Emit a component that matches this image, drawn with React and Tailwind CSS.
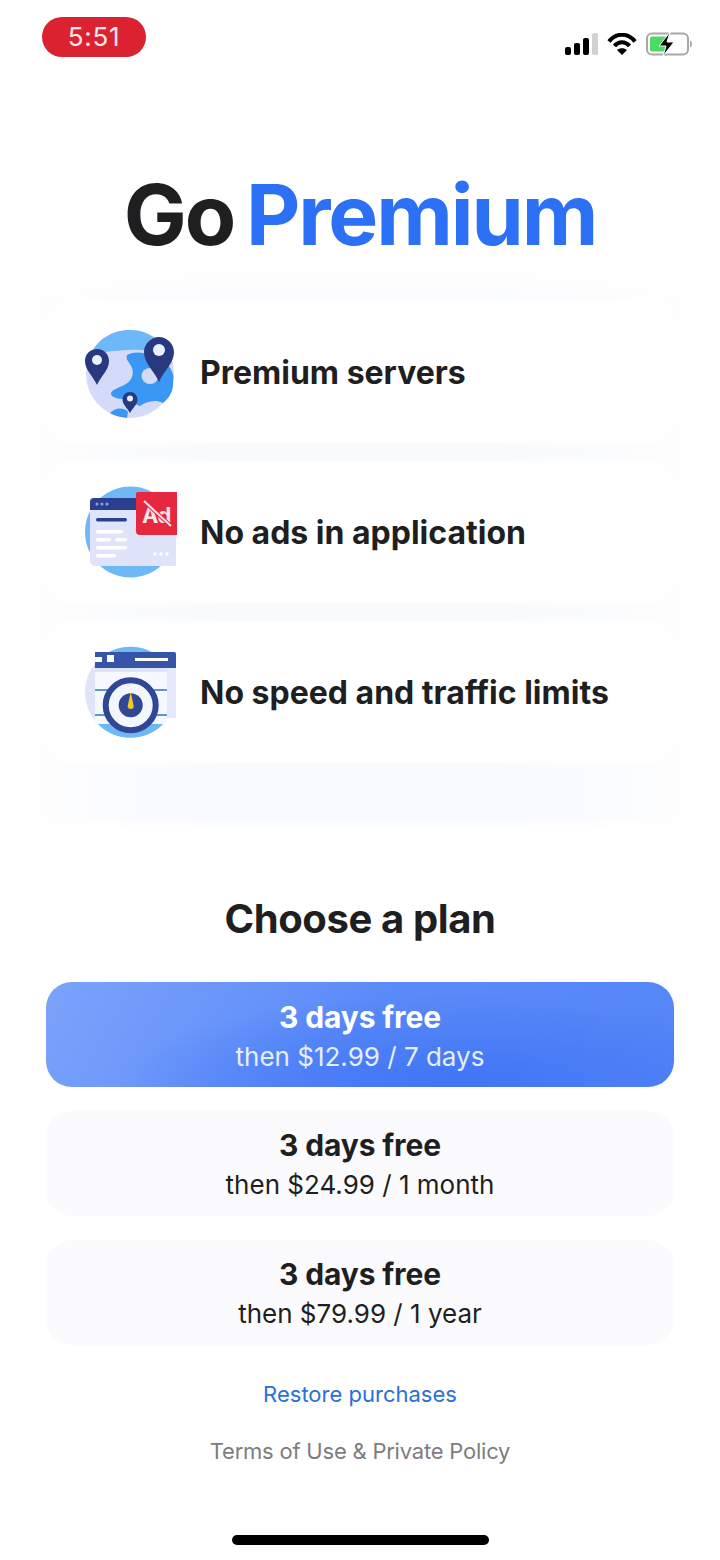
const features = [
  { id: "servers", label: "Premium servers", icon: <GlobeIcon /> },
  { id: "ads", label: "No ads in application", icon: <AdsIcon /> },
  { id: "speed", label: "No speed and traffic limits", icon: <SpeedIcon /> },
];

const plans = [
  { id: "week", price: "then $12.99 / 7 days", active: true },
  { id: "month", price: "then $24.99 / 1 month" },
  { id: "year", price: "then $79.99 / 1 year" },
];

function GlobeIcon() {
  return (
    <svg width="96" height="92" viewBox="0 0 96 92" fill="none">
      <circle cx="46" cy="48" r="44" fill="#d3dbf8" />
      <path d="M6 30C12 14 28 4 46 4c20 0 36 13 43 34-4-4-9-9-14-11-9-3-20-4-31-3-13 1-26 1-38 6Z" fill="#6db8f8" />
      <path d="M43 29C50 25 60 26 70 30c10 3 17 10 19.500 20L89 60c-1 8-5 13-10 17-9-4-17-1-23 3-6-2-10-7-16-7-5 0-12-1-13-5 0-5 9-6 15-10 6-4 8-10 6-16-2-6-7-8-5-13Z" fill="#3a97f4" />
      <ellipse cx="66" cy="50" rx="8.500" ry="8" fill="#d3dbf8" />
      <path d="M26 87c4-4 12-7 18-1l-1 6c-7-1-12-2-17-5Z" fill="#3a97f4" />
      <path d="M13 23c7 0 12 5 12 12 0 9-8 15-12 24C9 50 1 44 1 35c0-7 5-12 12-12Z" fill="#28397f" />
      <circle cx="13" cy="34" r="5" fill="#e7f0fc" />
      <path d="M75 11c8 0 15 7 15 15 0 12-10 18-15 30-5-12-15-18-15-30 0-8 7-15 15-15Z" fill="#28397f" />
      <circle cx="75" cy="24" r="6" fill="#e7f0fc" />
      <path d="M46 66c4 0 7.500 3 7.500 7.500 0 5-4.500 8-7.500 13.500-3-5.500-7.500-8.500-7.500-13.500 0-4.500 3.500-7.500 7.500-7.500Z" fill="#28397f" />
      <circle cx="46" cy="72.500" r="3" fill="#e7f0fc" />
    </svg>
  );
}

function AdsIcon() {
  return (
    <svg width="96" height="92" viewBox="0 0 96 92" fill="none">
      <circle cx="46.500" cy="46" r="45.500" fill="#6fb8f6" />
      <path d="M6 24h86v56H11a5 5 0 0 1-5-5Z" fill="#dfe4fb" />
      <path d="M6 16a4 4 0 0 1 4-4h43v12H6Z" fill="#2a3f8d" />
      <circle cx="13" cy="18" r="1.500" fill="#8fa3e2" />
      <circle cx="18" cy="18" r="1.500" fill="#8fa3e2" />
      <circle cx="23" cy="18" r="1.500" fill="#8fa3e2" />
      <rect x="12" y="32" width="31" height="3.500" rx="1.700" fill="#2a3f8d" />
      <rect x="12" y="44" width="27" height="3.500" rx="1.700" fill="#fff" />
      <rect x="12" y="52" width="15" height="3.500" rx="1.700" fill="#fff" />
      <rect x="31" y="52" width="12" height="3.500" rx="1.700" fill="#fff" />
      <rect x="12" y="60" width="31" height="3.500" rx="1.700" fill="#fff" />
      <rect x="12" y="68" width="20" height="3.500" rx="1.700" fill="#fff" />
      <circle cx="71" cy="68" r="1.700" fill="#fff" />
      <circle cx="77" cy="68" r="1.700" fill="#fff" />
      <circle cx="83" cy="68" r="1.700" fill="#fff" />
      <path d="M52 8a2 2 0 0 1 2-2h39v43H56a4 4 0 0 1-4-4Z" fill="#e5273f" />
      <text x="58" y="37" fontFamily="Inter, sans-serif" fontSize="22" fontWeight="700" fill="#fbe3e6" letterSpacing="-0.5">Ad</text>
      <path d="M60 15l27 25" stroke="#e5273f" strokeWidth="4" />
      <path d="M60 15l27 25" stroke="#fbe3e6" strokeWidth="2" />
    </svg>
  );
}

function SpeedIcon() {
  return (
    <svg width="96" height="92" viewBox="0 0 96 92" fill="none">
      <circle cx="46.500" cy="46" r="45.500" fill="#dfe4fb" />
      <path d="M22 8a45.500 45.500 0 0 1 49 0Z" fill="#6fb8f6" />
      <path d="M12 76h69a45.500 45.500 0 0 1-69 0Z" fill="#6fb8f6" />
      <rect x="83" y="22" width="9" height="50" fill="#e6e9fc" />
      <rect x="11" y="26" width="72" height="52" fill="#f6f8ff" />
      <path d="M11 44h72M11 69h72" stroke="#2f74c8" strokeWidth="1.500" />
      <path d="M11 6h79a2 2 0 0 1 2 2v14H11Z" fill="#3655a7" />
      <rect x="11" y="11" width="7" height="5" fill="#fff" />
      <rect x="23" y="9" width="7" height="7" fill="#fff" />
      <rect x="51" y="12" width="33" height="3" fill="#fff" />
      <circle cx="46.700" cy="59.300" r="25" fill="#f4f6fe" stroke="#2f4796" strokeWidth="6" />
      <circle cx="46.700" cy="59.300" r="12" fill="#2f4796" />
      <path d="M46.700 46l3 14a3 3 0 0 1-6 0Z" fill="#f5c91e" />
    </svg>
  );
}

function StatusIcons() {
  return (
    <div className="flex items-center gap-[9px]">
      <svg width="33" height="22" viewBox="0 0 33 22">
        <rect x="0" y="14" width="6" height="8" rx="2" fill="#000" />
        <rect x="9" y="10" width="6" height="12" rx="2" fill="#000" />
        <rect x="18" y="5" width="6" height="17" rx="2" fill="#000" />
        <rect x="27" y="0" width="6" height="22" rx="1.500" fill="#d2d2d2" />
      </svg>
      <svg width="30" height="22" viewBox="0 0 30 22" fill="none" stroke="#000" strokeWidth="4">
        <path d="M2 8.500C9-.5 21-.5 28 8.500" />
        <path d="M7.500 13C11.500 8 18.500 8 22.500 13" />
        <path d="M15 22l-5-5c3-2.500 7-2.500 10 0Z" fill="#000" stroke="none" />
      </svg>
      <svg width="46" height="24" viewBox="0 0 46 24" fill="none">
        <rect x="1" y="1.500" width="41" height="21" rx="5" stroke="#a8a8a8" strokeWidth="2" />
        <rect x="4" y="4.500" width="17" height="15" rx="2" fill="#4cd964" />
        <path d="M44 8.500c1.500.5 2 2 2 3.500s-.5 3-2 3.500Z" fill="#a8a8a8" />
        <path d="M24 0 13 14h7l-3 10 11-14h-7Z" fill="#000" stroke="#fff" strokeWidth="1" />
      </svg>
    </div>
  );
}

export default function App() {
  return (
    <div className="relative flex h-[1560px] w-[720px] flex-col overflow-hidden bg-white font-['Inter',sans-serif] text-[#1f1f21]">
      <div className="flex h-[57px] items-start justify-between pl-[42px] pr-[28px] pt-[17px]">
        <div className="flex h-[40px] w-[104px] items-center justify-center rounded-[20px] bg-[#da2230] text-[26px] leading-none tracking-wide text-[#fbe8e9]">
          5:51
        </div>
        <div className="pt-[15px]">
          <StatusIcons />
        </div>
      </div>

      <h1 className="mt-[113px] text-center text-[84px] font-bold leading-[90px] tracking-[-0.025em] [word-spacing:-6px]">
        Go <span className="text-[#2b70f5]">Premium</span>
      </h1>

      <div className="mt-[2px] flex flex-col gap-[20px] bg-[linear-gradient(to_bottom,white,transparent_12%),linear-gradient(to_right,white,#f7f9fe_30%,#f7f9fe_70%,white)] px-[46px] pb-[65px] pt-[40px]">
        {features.map((feature) => (
          <div key={feature.id} className="flex h-[140px] items-center gap-[20px] rounded-[28px] bg-white pl-[38px] shadow-[0_0_14px_white]">
            <div className="h-[92px] w-[96px] shrink-0">{feature.icon}</div>
            <span className="whitespace-nowrap pt-[2px] text-[32px] font-bold">{feature.label}</span>
          </div>
        ))}
      </div>

      <div className="flex flex-1 flex-col items-center rounded-t-[40px] bg-white px-[46px] pt-[66px] shadow-[0_-4px_12px_white]">
        <h2 className="text-[40px] font-bold leading-[52px] tracking-[-0.01em]">Choose a plan</h2>
        <div className="mt-[37px] flex w-full flex-col gap-[24px]">
          {plans.map((plan) => (
            <div
              key={plan.id}
              className={`flex h-[105px] flex-col items-center rounded-[26px] ${
                plan.active
                  ? "bg-[radial-gradient(ellipse_55%_90%_at_66%_100%,#3f74f5_0%,transparent_100%),linear-gradient(120deg,#7ba3fb_0%,#5b8bf8_50%,#5586f7_100%)] pt-[16px] text-white"
                  : "bg-[#fbfbfd] pt-[15px]"
              }`}
            >
              <span className="text-[30px] font-bold leading-[38px] tracking-[-0.005em]">3 days free</span>
              <span className={`text-[26px] leading-[42px] ${plan.active ? "text-[#e6eeff]" : ""}`}>{plan.price}</span>
            </div>
          ))}
        </div>
        <a className="mt-[34px] text-[22px] leading-[30px] text-[#2b70d9]">Restore purchases</a>
        <a className="mt-[27px] text-[22px] leading-[30px] tracking-[-0.01em] text-[#7d7d80]">Terms of Use &amp; Private Policy</a>
      </div>

      <div className="absolute bottom-[15px] left-[232px] h-[10px] w-[257px] rounded-full bg-black" />
    </div>
  );
}
